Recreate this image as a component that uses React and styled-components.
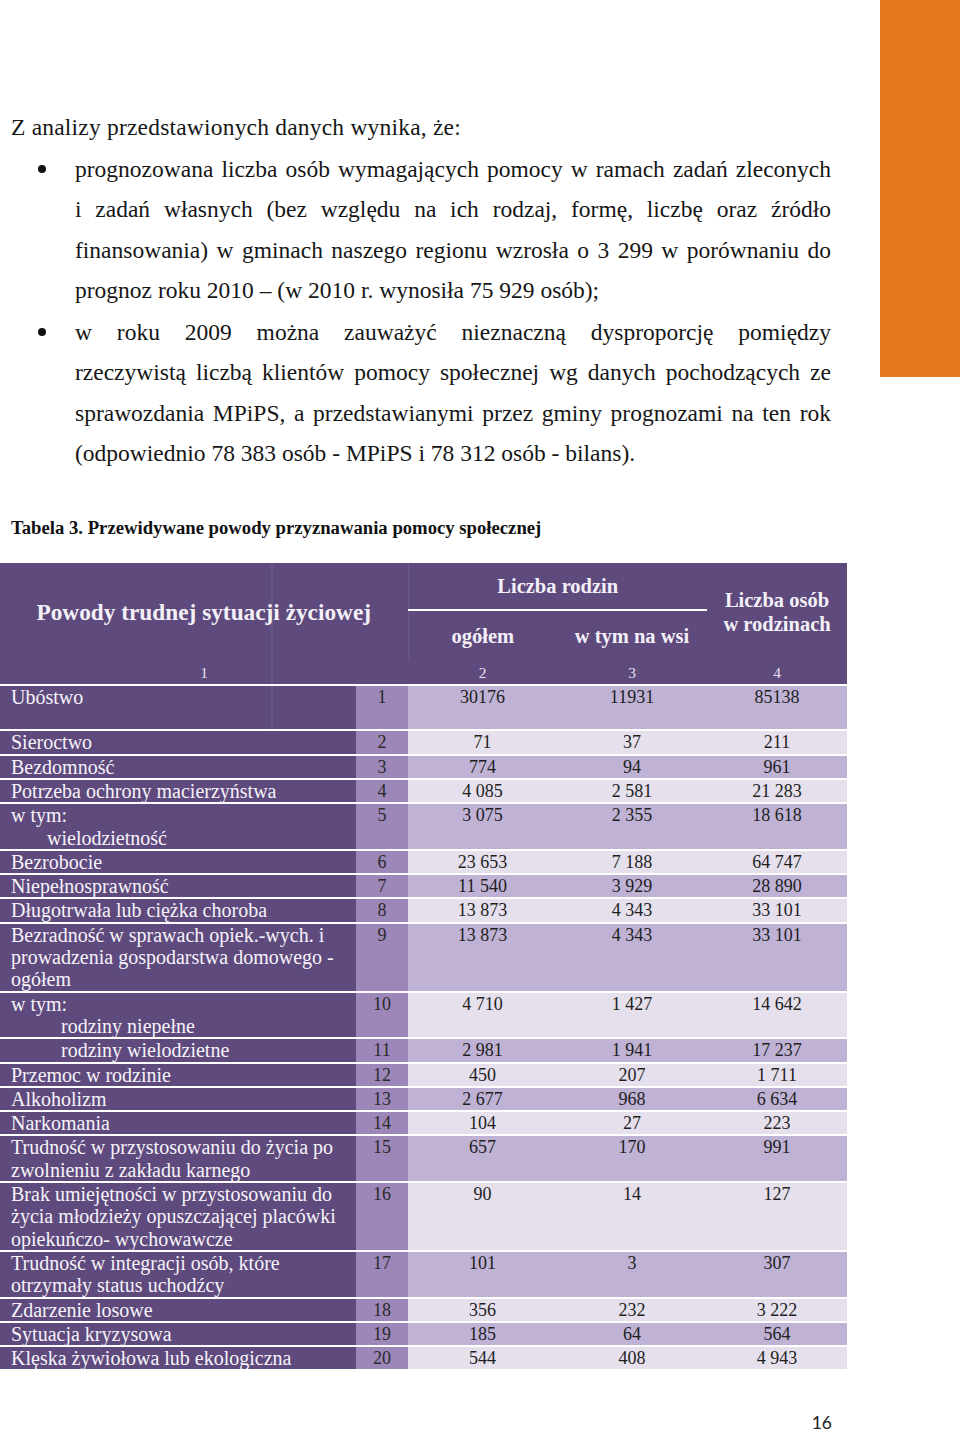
import React from 'react';
import styled, { createGlobalStyle } from 'styled-components';

const GlobalStyle = createGlobalStyle`
  html, body {
    margin: 0;
    padding: 0;
    background: #ffffff;
  }
  body {
    font-family: "Liberation Serif", "DejaVu Serif", serif;
    color: #161616;
  }
`;

const DARK = '#5e4a7c';
const MID = '#9c87b8';
const TONE_M = '#bfb2d4';
const TONE_L = '#e5e0ec';

const bullets = [
  [
    'prognozowana liczba osób wymagających pomocy w ramach zadań zleconych',
    'i zadań własnych (bez względu na ich rodzaj, formę, liczbę oraz źródło',
    'finansowania) w gminach naszego regionu wzrosła o 3 299 w porównaniu do',
    'prognoz roku 2010 – (w 2010 r. wynosiła 75 929 osób);',
  ],
  [
    'w roku 2009 można zauważyć nieznaczną dysproporcję pomiędzy',
    'rzeczywistą liczbą klientów pomocy społecznej wg danych pochodzących ze',
    'sprawozdania MPiPS, a przedstawianymi przez gminy prognozami na ten rok',
    '(odpowiednio 78 383 osób - MPiPS i 78 312 osób - bilans).',
  ],
];

// label lines: string, or [text, indent]
const rows = [
  { label: ['Ubóstwo'], v: ['30176', '11931', '85138'], tall: true },
  { label: ['Sieroctwo'], v: ['71', '37', '211'] },
  { label: ['Bezdomność'], v: ['774', '94', '961'] },
  { label: ['Potrzeba ochrony macierzyństwa'], v: ['4 085', '2 581', '21 283'] },
  { label: ['w tym:', ['wielodzietność', 36]], v: ['3 075', '2 355', '18 618'] },
  { label: ['Bezrobocie'], v: ['23 653', '7 188', '64 747'] },
  { label: ['Niepełnosprawność'], v: ['11 540', '3 929', '28 890'] },
  { label: ['Długotrwała lub ciężka choroba'], v: ['13 873', '4 343', '33 101'] },
  {
    label: ['Bezradność w sprawach opiek.-wych. i', 'prowadzenia gospodarstwa domowego -', 'ogółem'],
    v: ['13 873', '4 343', '33 101'],
  },
  { label: ['w tym:', ['rodziny niepełne', 50]], v: ['4 710', '1 427', '14 642'] },
  { label: [['rodziny wielodzietne', 50]], v: ['2 981', '1 941', '17 237'] },
  { label: ['Przemoc w rodzinie'], v: ['450', '207', '1 711'] },
  { label: ['Alkoholizm'], v: ['2 677', '968', '6 634'] },
  { label: ['Narkomania'], v: ['104', '27', '223'] },
  {
    label: ['Trudność w przystosowaniu do życia po', 'zwolnieniu z zakładu karnego'],
    v: ['657', '170', '991'],
  },
  {
    label: [
      'Brak umiejętności w przystosowaniu do',
      'życia młodzieży opuszczającej placówki',
      'opiekuńczo- wychowawcze',
    ],
    v: ['90', '14', '127'],
  },
  {
    label: ['Trudność w integracji osób, które', 'otrzymały status uchodźcy'],
    v: ['101', '3', '307'],
  },
  { label: ['Zdarzenie losowe'], v: ['356', '232', '3 222'] },
  { label: ['Sytuacja kryzysowa'], v: ['185', '64', '564'] },
  { label: ['Klęska żywiołowa lub ekologiczna'], v: ['544', '408', '4 943'] },
];

export default function App() {
  return (
    <>
      <GlobalStyle />
      <Page>
        <Main>
          <Intro>Z analizy przedstawionych danych wynika, że:</Intro>
          <BulletList>
            {bullets.map((lines, i) => (
              <BulletItem key={i}>
                <Dot />
                <div>
                  {lines.map((line, j) => (
                    <Line key={j} $last={j === lines.length - 1}>{line}</Line>
                  ))}
                </div>
              </BulletItem>
            ))}
          </BulletList>

          <Caption>Tabela 3. Przewidywane powody przyznawania pomocy społecznej</Caption>

          <Table>
            <colgroup>
              <col style={{ width: 356 }} />
              <col style={{ width: 52 }} />
              <col style={{ width: 149 }} />
              <col style={{ width: 150 }} />
              <col style={{ width: 140 }} />
            </colgroup>
            <thead>
              <HeadRow $h={47}>
                <HeadCell colSpan={2} rowSpan={2} $big $seam>
                  Powody trudnej sytuacji życiowej
                </HeadCell>
                <HeadCell colSpan={2} $underline $divider>Liczba rodzin</HeadCell>
                <HeadCell rowSpan={2} $tight>
                  Liczba osób
                  <br />
                  w rodzinach
                </HeadCell>
              </HeadRow>
              <HeadRow $h={51}>
                <HeadCell $divider>ogółem</HeadCell>
                <HeadCell>w tym na wsi</HeadCell>
              </HeadRow>
              <IndexRow>
                <IndexCell colSpan={2} $seam>1</IndexCell>
                <IndexCell>2</IndexCell>
                <IndexCell>3</IndexCell>
                <IndexCell>4</IndexCell>
              </IndexRow>
            </thead>
            <tbody>
              {rows.map((row, i) => (
                <BodyRow key={i}>
                  <LabelCell $tall={row.tall} $seam={row.tall}>
                    {row.label.map((l, k) =>
                      Array.isArray(l) ? (
                        <LabelLine key={k} $indent={l[1]}>{l[0]}</LabelLine>
                      ) : (
                        <LabelLine key={k}>{l}</LabelLine>
                      )
                    )}
                  </LabelCell>
                  <NoCell>{i + 1}</NoCell>
                  {row.v.map((val, k) => (
                    <ValueCell key={k} $tone={i % 2 === 0 ? TONE_M : TONE_L}>
                      {val}
                    </ValueCell>
                  ))}
                </BodyRow>
              ))}
            </tbody>
          </Table>

          <PageNumber>16</PageNumber>
        </Main>
        <SideTab />
      </Page>
    </>
  );
}

const Page = styled.div`
  display: flex;
  width: 960px;
  min-height: 1433px;
`;

const Main = styled.main`
  flex: 1;
  display: flex;
  flex-direction: column;
  padding-top: 107px;
`;

const SideTab = styled.div`
  flex-shrink: 0;
  width: 80px;
  height: 377px;
  background: #e37719;
`;

const Intro = styled.p`
  margin: 0;
  padding-left: 11px;
  font-size: 23.5px;
  line-height: 40px;
  letter-spacing: 0.2px;
`;

const BulletList = styled.ul`
  list-style: none;
  margin: 2px 0 0 0;
  padding: 0;
  width: 831px;
  display: flex;
  flex-direction: column;
  gap: 2px;
`;

const BulletItem = styled.li`
  display: grid;
  grid-template-columns: 75px 1fr;
  font-size: 23.5px;
  line-height: 40.3px;
`;

const Dot = styled.span`
  width: 8px;
  height: 8px;
  margin: 16px 0 0 37.5px;
  border-radius: 50%;
  background: #111;
`;

const Line = styled.span`
  display: block;
  text-align: justify;
  text-align-last: ${(p) => (p.$last ? 'left' : 'justify')};
`;

const Caption = styled.h3`
  margin: 43px 0 23px 0;
  padding-left: 11px;
  font-size: 18.7px;
  line-height: 24px;
  font-weight: bold;
  color: #111;
`;

const Table = styled.table`
  width: 847px;
  table-layout: fixed;
  border-collapse: collapse;
  border-spacing: 0;
`;

const seam = `linear-gradient(to right, transparent 271px, rgba(255,255,255,0.07) 271px, rgba(255,255,255,0.07) 273px, transparent 273px)`;

const HeadRow = styled.tr`
  height: ${(p) => p.$h}px;
`;

const HeadCell = styled.th`
  padding: 0;
  background: ${DARK};
  background-image: ${(p) => (p.$seam ? seam : 'none')};
  color: #f4f0f8;
  font-weight: bold;
  font-size: ${(p) => (p.$big ? '23.3px' : '20.5px')};
  line-height: ${(p) => (p.$tight ? '24px' : '26px')};
  text-align: center;
  vertical-align: middle;
  border-bottom: 2px solid ${(p) => (p.$underline ? '#ffffff' : DARK)};
  border-left: ${(p) => (p.$divider ? '1px solid #6a5888' : 'none')};
`;

const IndexRow = styled.tr`
  height: 24px;
  border-top: 2px solid #ffffff;
`;

const IndexCell = styled.td`
  padding: 0;
  background: ${DARK};
  background-image: ${(p) => (p.$seam ? seam : 'none')};
  color: #e6e0ee;
  font-size: 15.5px;
  line-height: 22px;
  text-align: center;
  border-bottom: 2px solid #ffffff;
`;

const BodyRow = styled.tr`
  border-bottom: 2px solid #ffffff;
`;

const LabelCell = styled.td`
  padding: 0 0 0 11px;
  height: ${(p) => (p.$tall ? '43px' : 'auto')};
  background: ${DARK};
  background-image: ${(p) => (p.$seam ? seam : 'none')};
  color: #f6f3fa;
  font-size: 20px;
  line-height: 22.3px;
  vertical-align: top;
`;

const LabelLine = styled.span`
  display: block;
  white-space: nowrap;
  padding-left: ${(p) => p.$indent || 0}px;
`;

const NoCell = styled.td`
  padding: 0;
  background: ${MID};
  color: #2a2a2a;
  font-size: 18px;
  line-height: 22.3px;
  text-align: center;
  vertical-align: top;
`;

const ValueCell = styled.td`
  padding: 0;
  background: ${(p) => p.$tone};
  color: #1e1e1e;
  font-size: 18px;
  line-height: 22.3px;
  text-align: center;
  vertical-align: top;
`;

const PageNumber = styled.div`
  margin-top: 43px;
  padding-right: 48px;
  text-align: right;
  font-family: Lato, "Open Sans", sans-serif;
  font-size: 17.5px;
  line-height: 17px;
  color: #222;
`;
